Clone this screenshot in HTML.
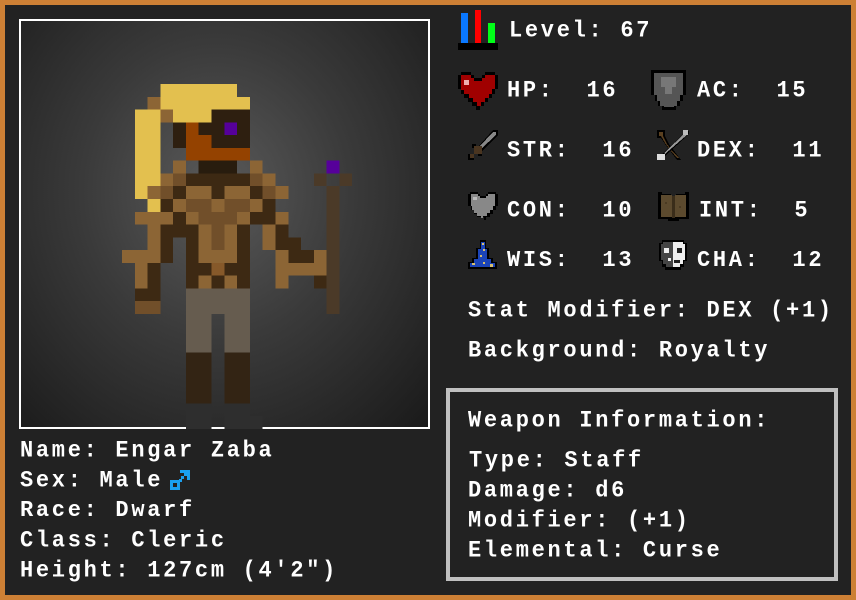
<!DOCTYPE html>
<html><head><meta charset="utf-8"><style>
*{margin:0;padding:0;box-sizing:border-box}
body{width:856px;height:600px;background:#cd8035;position:relative;overflow:hidden}
#p{position:absolute;left:5px;top:5px;width:846px;height:590px;background:#222}
#frame{position:absolute;left:19px;top:19px;width:411px;height:410px;border:2px solid #fff;background:radial-gradient(ellipse at 48% 42%,#5a5a5a 0%,#3a3a3a 45%,#1a1a1a 100%)}
.t{position:absolute;color:#fff;font-family:"Liberation Mono",monospace;font-weight:bold;font-size:22px;line-height:20px;letter-spacing:2.7px;white-space:pre;transform:scaleY(1.05)}
#wbox{position:absolute;left:446px;top:388px;width:392px;height:193px;border:4px solid #c0c0c0}
svg{position:absolute}
</style></head><body>
<div id="p"></div>
<div id="frame"></div>
<svg style="left:122px;top:84px" width="243" height="345" viewBox="0 0 19 27" preserveAspectRatio="none" shape-rendering="crispEdges">
<g fill="#e3c04f"><rect x="3" y="0" width="6" height="1"/><rect x="3" y="1" width="7" height="1"/><rect x="1" y="2" width="2" height="6"/><rect x="4" y="2" width="3" height="1"/><rect x="1" y="8" width="1" height="1"/><rect x="2" y="9" width="1" height="1"/></g>
<g fill="#8c6535"><rect x="2" y="1" width="1" height="1"/><rect x="3" y="2" width="1" height="1"/><rect x="4" y="6" width="1" height="1"/><rect x="10" y="6" width="1" height="1"/><rect x="3" y="7" width="1" height="1"/><rect x="11" y="7" width="1" height="1"/><rect x="2" y="8" width="1" height="1"/><rect x="5" y="8" width="2" height="1"/><rect x="8" y="8" width="2" height="1"/><rect x="12" y="8" width="1" height="1"/><rect x="4" y="9" width="1" height="1"/><rect x="7" y="9" width="1" height="1"/><rect x="10" y="9" width="1" height="1"/><rect x="1" y="10" width="3" height="1"/><rect x="5" y="10" width="1" height="1"/><rect x="9" y="10" width="1" height="1"/><rect x="12" y="10" width="1" height="1"/><rect x="2" y="11" width="1" height="2"/><rect x="6" y="11" width="1" height="2"/><rect x="8" y="11" width="1" height="2"/><rect x="11" y="11" width="1" height="2"/><rect x="0" y="13" width="3" height="1"/><rect x="6" y="13" width="3" height="1"/><rect x="12" y="13" width="1" height="1"/><rect x="15" y="13" width="1" height="1"/><rect x="1" y="14" width="1" height="2"/><rect x="12" y="14" width="4" height="1"/><rect x="6" y="15" width="1" height="1"/><rect x="8" y="15" width="1" height="1"/><rect x="12" y="15" width="1" height="1"/></g>
<g fill="#714f2a"><rect x="4" y="7" width="1" height="1"/><rect x="10" y="7" width="1" height="1"/><rect x="3" y="8" width="1" height="1"/><rect x="11" y="8" width="1" height="1"/><rect x="5" y="9" width="2" height="1"/><rect x="8" y="9" width="2" height="1"/><rect x="6" y="10" width="3" height="1"/><rect x="7" y="11" width="1" height="2"/><rect x="1" y="17" width="2" height="1"/></g>
<g fill="#3d2913"><rect x="5" y="7" width="5" height="1"/><rect x="4" y="8" width="1" height="1"/><rect x="7" y="8" width="1" height="1"/><rect x="10" y="8" width="1" height="1"/><rect x="3" y="9" width="1" height="1"/><rect x="11" y="9" width="1" height="1"/><rect x="4" y="10" width="1" height="1"/><rect x="10" y="10" width="2" height="1"/><rect x="3" y="11" width="3" height="1"/><rect x="9" y="11" width="1" height="5"/><rect x="12" y="11" width="1" height="1"/><rect x="3" y="12" width="1" height="2"/><rect x="5" y="12" width="1" height="4"/><rect x="12" y="12" width="2" height="1"/><rect x="13" y="13" width="2" height="1"/><rect x="2" y="14" width="1" height="2"/><rect x="6" y="14" width="1" height="1"/><rect x="8" y="14" width="1" height="1"/><rect x="7" y="15" width="1" height="1"/><rect x="15" y="15" width="1" height="1"/><rect x="1" y="16" width="2" height="1"/></g>
<rect x="7" y="14" width="1" height="1" fill="#86592a"/>
<g fill="#2e1f10"><rect x="7" y="2" width="3" height="1"/><rect x="4" y="3" width="1" height="2"/><rect x="6" y="3" width="2" height="1"/><rect x="9" y="3" width="1" height="1"/><rect x="7" y="4" width="3" height="1"/></g>
<g fill="#944200"><rect x="5" y="3" width="1" height="1"/><rect x="5" y="4" width="2" height="1"/><rect x="5" y="5" width="5" height="1"/></g>
<g fill="#56009a"><rect x="8" y="3" width="1" height="1"/><rect x="16" y="6" width="1" height="1"/></g>
<rect x="6" y="6" width="3" height="1" fill="#281c0e"/>
<g fill="#4b3a28"><rect x="15" y="7" width="1" height="1"/><rect x="17" y="7" width="1" height="1"/><rect x="16" y="8" width="1" height="10"/></g>
<g fill="#665c4f"><rect x="5" y="16" width="5" height="2"/><rect x="5" y="18" width="2" height="3"/><rect x="8" y="18" width="2" height="3"/></g>
<g fill="#332414"><rect x="5" y="21" width="2" height="4"/><rect x="8" y="21" width="2" height="4"/></g>
<g fill="#2e2e2e"><rect x="5" y="25" width="2" height="2"/><rect x="8" y="25" width="2" height="2"/><rect x="10" y="26" width="1" height="1"/></g>
</svg>

<div class="t" style="left:20px;top:441px">Name: Engar Zaba</div>
<div class="t" style="left:20px;top:471px">Sex: Male</div>
<svg style="left:170px;top:470px" width="21" height="21" viewBox="0 0 21 21" shape-rendering="crispEdges"><g fill="#1aa0f0"><rect x="10" y="0" width="10" height="3"/><rect x="17" y="0" width="3" height="10"/><rect x="14" y="3" width="3" height="3"/><rect x="11" y="6" width="3" height="3"/><rect x="9" y="9" width="3" height="3"/><rect x="0" y="11" width="3" height="9"/><rect x="0" y="17" width="10" height="3"/><rect x="0" y="10" width="10" height="3"/><rect x="7" y="10" width="3" height="10"/></g></svg>
<div class="t" style="left:20px;top:501px">Race: Dwarf</div>
<div class="t" style="left:20px;top:531px">Class: Cleric</div>
<div class="t" style="left:20px;top:561px">Height: 127cm (4'2")</div>

<svg style="left:458px;top:10px" width="40" height="40" shape-rendering="crispEdges"><rect x="3" y="3" width="7" height="30" fill="#0a78ff"/><rect x="17" y="0" width="6" height="33" fill="#ff0000"/><rect x="30" y="13" width="7" height="20" fill="#00ff18"/><rect x="0" y="33" width="40" height="7" fill="#000"/></svg>
<div class="t" style="left:509px;top:21px">Level: 67</div>

<svg style="left:458px;top:72px" width="40" height="38" viewBox="0 0 40 38" shape-rendering="crispEdges"><path d="M3 0h10v3h3v3h8V3h3V0h10v3h3v14h-3v5h-3v4h-4v4h-4v4h-4v4h-4v-4h-4v-4h-4v-4h-4v-4H3v-5H0V3h3z" fill="#000"/><path d="M3 3h10v3h3v3h8V6h3V3h10v14h-3v5h-3v4h-4v4h-4v4h-4v-4h-4v-4h-4v-4H6v-4H3z" fill="#a00000"/><rect x="6" y="8" width="5" height="5" fill="#f0b0b0"/></svg>
<div class="t" style="left:507px;top:81px">HP:  16</div>
<svg style="left:651px;top:70px" width="35" height="40" viewBox="0 0 35 40" shape-rendering="crispEdges"><path d="M0 0h35v25h-3v6h-3v5h-4v4H11v-4H7v-5H4v-6H0z" fill="#000"/><path d="M3 3h29v22h-3v6h-3v5h-3v1h-10v-1H9v-5H6v-6H3z" fill="#555"/><rect x="10" y="7" width="15" height="10" fill="#777"/><rect x="14" y="17" width="7" height="7" fill="#777"/></svg>
<div class="t" style="left:697px;top:81px">AC:  15</div>

<svg style="left:468px;top:130px" width="30" height="30" viewBox="0 0 30 30" shape-rendering="crispEdges"><path d="M25 0h5v5L13 22l-4-4z" fill="#000"/><path d="M25 2h3v3L13 19l-2-2z" fill="#888"/><rect x="4" y="14" width="4" height="4" fill="#000"/><rect x="10" y="22" width="4" height="4" fill="#000"/><rect x="6" y="16" width="8" height="8" fill="#4a3520"/><rect x="0" y="24" width="6" height="6" fill="#000"/><rect x="2" y="24" width="4" height="4" fill="#4a3520"/></svg>
<div class="t" style="left:507px;top:141px">STR:  16</div>
<svg style="left:657px;top:130px" width="32" height="30" viewBox="0 0 32 30" shape-rendering="crispEdges"><path d="M0 0h8v6l4 8l6 8l6 8h-4l-6-8l-6-8l-4-6H0z" fill="#000"/><path d="M2 2h4v4l4 8l6 8l6 6h-2l-6-7l-6-8l-4-7H2z" fill="#5a4020"/><path d="M30 1h2v3L8 26l-3-2z" fill="#000"/><path d="M29 2h2v2L8 24l-1-1z" fill="#999"/><rect x="0" y="24" width="8" height="6" fill="#ddd"/><rect x="26" y="0" width="5" height="5" fill="#bbb"/></svg>
<div class="t" style="left:697px;top:141px">DEX:  11</div>

<svg style="left:468px;top:192px" width="30" height="28" viewBox="0 0 30 28" shape-rendering="crispEdges"><path d="M2 0h8v2h2v2h6V2h2V0h8v2h2v12h-2v4h-3v4h-3v3h-4v3h-2v-3H9v-3H6v-4H3v-4H0V2h2z" fill="#000"/><path d="M3 2h7v2h2v2h6V4h2V2h7v12h-2v4h-3v3h-3v3h-4v2h-2v-2H9v-3H6v-3H4v-4H3z" fill="#888"/><rect x="5" y="5" width="4" height="3" fill="#bbb"/></svg>
<div class="t" style="left:507px;top:201px">CON:  10</div>
<svg style="left:658px;top:192px" width="31" height="29" viewBox="0 0 31 29" shape-rendering="crispEdges"><path d="M0 0h4v2h9v2h5V2h9V0h4v27h-10v2H10v-2H0z" fill="#000"/><rect x="3" y="3" width="11" height="22" fill="#5c4a2e"/><rect x="17" y="3" width="11" height="22" fill="#5c4a2e"/><rect x="14" y="4" width="3" height="22" fill="#3a2d1a"/><rect x="7" y="10" width="2" height="2" fill="#4a3a22"/><rect x="21" y="14" width="2" height="2" fill="#4a3a22"/></svg>
<div class="t" style="left:699px;top:201px">INT:  5</div>

<svg style="left:468px;top:240px" width="30" height="30" viewBox="0 0 30 30" shape-rendering="crispEdges"><path d="M12 0h6v8h3v10h4v4h4v7H0v-7h4v-4h4V8h4z" fill="#000"/><path d="M13 2h4v7h2v10h4v4h4v4H2v-4h4v-4h4V9h3z" fill="#1b44b8"/><g fill="#d8c070"><rect x="14" y="3" width="2" height="2"/><rect x="15" y="9" width="2" height="2"/><rect x="12" y="15" width="2" height="2"/><rect x="4" y="23" width="3" height="2"/><rect x="22" y="24" width="3" height="3"/><rect x="15" y="22" width="2" height="2"/></g></svg>
<div class="t" style="left:507px;top:251px">WIS:  13</div>
<svg style="left:658px;top:240px" width="30" height="30" viewBox="0 0 30 30" shape-rendering="crispEdges"><path d="M4 0h22v3h3v18h-3v6h-3v3H7v-3H4v-6H1V3h3z" fill="#000"/><path d="M5 2h10v25H8v-3H5v-4H3V4h2z" fill="#444"/><path d="M15 2h10v2h2v16h-2v4h-3v3h-7z" fill="#eee"/><rect x="6" y="8" width="5" height="5" fill="#eee"/><rect x="19" y="8" width="5" height="5" fill="#222"/><rect x="10" y="18" width="3" height="3" fill="#eee"/><rect x="16" y="20" width="6" height="3" fill="#222"/></svg>
<div class="t" style="left:697px;top:251px">CHA:  12</div>

<div class="t" style="left:468px;top:301px">Stat Modifier: DEX (+1)</div>
<div class="t" style="left:468px;top:341px">Background: Royalty</div>

<div id="wbox"></div>
<div class="t" style="left:468px;top:411px">Weapon Information:</div>
<div class="t" style="left:469px;top:451px">Type: Staff</div>
<div class="t" style="left:468px;top:481px">Damage: d6</div>
<div class="t" style="left:468px;top:511px">Modifier: (+1)</div>
<div class="t" style="left:468px;top:541px">Elemental: Curse</div>
</body></html>
